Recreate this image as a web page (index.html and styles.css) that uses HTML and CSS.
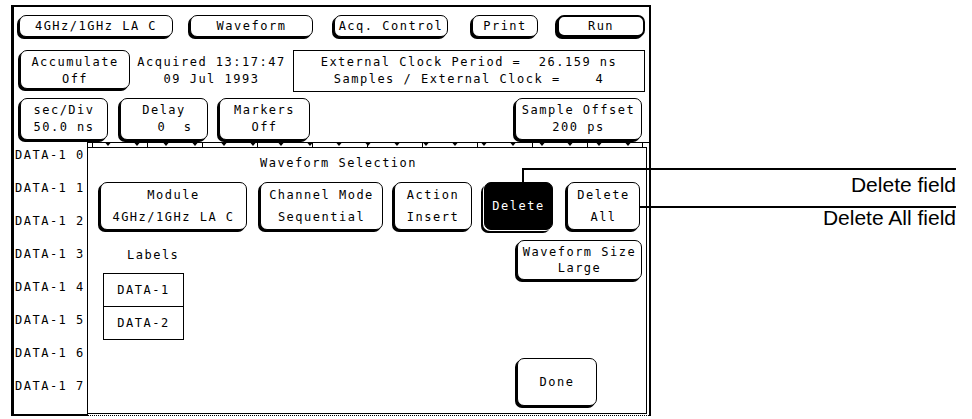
FILE: index.html
```html
<!DOCTYPE html>
<html>
<head>
<meta charset="utf-8">
<title>Waveform Selection</title>
<link rel="stylesheet" href="styles.css">
</head>
<body>
<div class="page">
  <div class="screen">
    <div class="row r1">
      <div class="btn b-mod"><span>4GHz/1GHz LA C</span></div>
      <div class="btn b-wave"><span>Waveform</span></div>
      <div class="btn b-acq"><span>Acq. Control</span></div>
      <div class="btn b-print"><span>Print</span></div>
      <div class="btn b-run"><span>Run</span></div>
    </div>
    <div class="row r2">
      <div class="btn b-accum"><span>Accumulate</span><span>Off</span></div>
      <div class="acquired"><span>Acquired 13:17:47</span><span>09 Jul 1993</span></div>
      <div class="clockbox"><span>External Clock Period =  26.159 ns</span><span>Samples / External Clock =    4</span></div>
    </div>
    <div class="row r3">
      <div class="btn b-sec"><span>sec/Div</span><span>50.0 ns</span></div>
      <div class="btn b-delay"><span>Delay</span><span class="delay-val">0  s</span></div>
      <div class="btn b-markers"><span>Markers</span><span>Off</span></div>
      <div class="btn b-offset"><span>Sample Offset</span><span>200 ps</span></div>
    </div>
    <div class="main">
      <div class="labels-col">
        <div class="lab">DATA-1 0</div>
        <div class="lab">DATA-1 1</div>
        <div class="lab">DATA-1 2</div>
        <div class="lab">DATA-1 3</div>
        <div class="lab">DATA-1 4</div>
        <div class="lab">DATA-1 5</div>
        <div class="lab">DATA-1 6</div>
        <div class="lab">DATA-1 7</div>
      </div>
      <div class="wave-area">
        <svg class="ruler" viewBox="0 0 561 5" width="561" height="5">
          <path d="M0 0.5H561" stroke="#000" stroke-width="1"/>
          <path d="M4.5 0V5M59.5 0V5M114.5 0V5M169.5 0V5M224.5 0V5M279.5 0V5M334.5 0V5M389.5 0V5M444.5 0V5M499.5 0V5M554.5 0V5" stroke="#000" stroke-width="1"/>
          <path d="M17.5 1h5l-2.5 3zM46.5 1h5l-2.5 3zM75.5 1h5l-2.5 3zM104.5 1h5l-2.5 3zM133.5 1h5l-2.5 3zM162.5 1h5l-2.5 3zM190.5 1h5l-2.5 3zM219.5 1h5l-2.5 3zM248.5 1h5l-2.5 3zM277.5 1h5l-2.5 3zM306.5 1h5l-2.5 3zM335.5 1h5l-2.5 3zM364.5 1h5l-2.5 3zM393.5 1h5l-2.5 3zM422.5 1h5l-2.5 3zM451.5 1h5l-2.5 3zM479.5 1h5l-2.5 3zM508.5 1h5l-2.5 3zM537.5 1h5l-2.5 3z" fill="#000"/>
        </svg>
        <div class="dialog">
          <div class="dlg-title">Waveform Selection</div>
          <div class="dlg-row">
            <div class="btn tall b-module"><span>Module</span><span>4GHz/1GHz LA C</span></div>
            <div class="btn tall b-chan"><span>Channel Mode</span><span>Sequential</span></div>
            <div class="btn tall b-action"><span>Action</span><span>Insert</span></div>
            <div class="btn tall b-del"><span>Delete</span></div>
            <div class="btn tall b-delall"><span>Delete</span><span>All</span></div>
          </div>
          <div class="dlg-lower">
            <div class="labels-area">
              <div class="labels-title">Labels</div>
              <div class="ltable">
                <div class="lrow">DATA-1</div>
                <div class="lrow">DATA-2</div>
              </div>
            </div>
            <div class="right-col">
              <div class="btn b-wsize"><span>Waveform Size</span><span>Large</span></div>
              <div class="btn b-done"><span>Done</span></div>
            </div>
          </div>
        </div>
      </div>
    </div>
  </div>
  <div class="notes">
    <div class="note">Delete field</div>
    <div class="note n2">Delete All field</div>
  </div>
</div>
</body>
</html>
```

FILE: styles.css
```css
* {
  box-sizing: border-box;
  margin: 0;
  padding: 0;
}

html, body {
  background: #fff;
}

body {
  margin: 0;
  font-family: "DejaVu Sans Mono", "Liberation Mono", monospace;
  font-size: 12px;
  letter-spacing: 1.5px;
  color: #000;
}

.page {
  display: flex;
  width: 972px;
  height: 419px;
  overflow: hidden;
}

/* ---------- instrument screen ---------- */
.screen {
  flex: none;
  margin-left: 11px;
  margin-top: 5px;
  width: 640px;
  height: 411px;
  border-top: 2px solid #000;
  border-left: 3px solid #000;
  border-right: 2px solid #000;
  display: flex;
  flex-direction: column;
}

.row {
  display: flex;
  align-items: flex-start;
  flex: none;
}

.r1 { margin-top: 8px; height: 22px; }
.r2 { margin-top: 13px; height: 42px; }
.r3 { margin-top: 6px; height: 42px; }

.btn {
  position: relative;
  flex: none;
  background: #fff;
  border: 1px solid #000;
  border-radius: 7px;
  box-shadow: -2px 2px 0 #000;
  display: flex;
  flex-direction: column;
  align-items: center;
  justify-content: center;
  white-space: pre;
  line-height: 17px;
}

/* row 1 */
.r1 .btn { height: 22px; }
.b-mod   { margin-left: 5px;  width: 154px; }
.b-wave  { margin-left: 17px; width: 123px; }
.b-acq   { margin-left: 21px; width: 114px; }
.b-print { margin-left: 24px; width: 66px; }
.b-run   { margin-left: 19px; width: 88px; border-width: 2px; }

/* row 2 */
.b-accum {
  margin-left: 6px;
  width: 110px;
  height: 39px;
  padding-top: 3px;
}

.acquired {
  flex: none;
  width: 163px;
  height: 42px;
  padding-top: 4px;
  display: flex;
  flex-direction: column;
  align-items: center;
  line-height: 17px;
  white-space: pre;
}

.clockbox {
  flex: none;
  width: 352px;
  height: 42px;
  border: 1px solid #000;
  display: flex;
  flex-direction: column;
  align-items: center;
  justify-content: center;
  line-height: 17px;
  white-space: pre;
}

/* row 3 */
.r3 .btn { height: 42px; }
.b-sec     { margin-left: 6px;   width: 88px; }
.b-delay   { margin-left: 12px;  width: 88px; }
.b-markers { margin-left: 11px;  width: 91px; }
.b-offset  { margin-left: 205px; width: 127px; }
.delay-val { padding-left: 22px; }

/* ---------- main area ---------- */
.main {
  margin-top: 2px;
  flex: 1;
  display: flex;
  min-height: 0;
}

.labels-col {
  flex: none;
  width: 74px;
  border-right: 1px solid #000;
  border-bottom: 2px solid #000;
  padding-top: 4px;
  padding-left: 1px;
}

.lab {
  height: 33px;
  line-height: 18px;
  white-space: pre;
}

.wave-area {
  flex: none;
  width: 561px;
  display: flex;
  flex-direction: column;
  padding-bottom: 1px;
  border-bottom: 1px dotted #000;
}

.ruler {
  display: block;
  flex: none;
  width: 561px;
  height: 5px;
}

.dialog {
  flex: 1;
  width: 559px;
  border-top: 1px solid #000;
  border-right: 1px solid #000;
  border-bottom: 1px solid #000;
  display: flex;
  flex-direction: column;
}

.dlg-title {
  margin-top: 6px;
  line-height: 18px;
  padding-left: 172px;
  white-space: pre;
}

.dlg-row {
  display: flex;
  align-items: flex-start;
  margin-top: 10px;
  padding-left: 12px;
}

.btn.tall {
  height: 48px;
  line-height: 22px;
}

.b-module { width: 147px; }
.b-chan   { margin-left: 13px; width: 123px; }
.b-action { margin-left: 11px; width: 78px; }
.b-del {
  margin-left: 12px;
  width: 69px;
  background: #000;
  color: #fff;
  box-shadow: -1px 1px 0 #fff, -3px 3px 0 #000;
}
.b-delall { margin-left: 14px; width: 73px; }

/* callout leader lines */
.b-del::before {
  content: "";
  position: absolute;
  left: 37px;
  top: -15px;
  width: 2px;
  height: 15px;
  background: #000;
}
.b-del::after {
  content: "";
  position: absolute;
  left: 37px;
  top: -15px;
  width: 434px;
  height: 2px;
  background: #000;
}
.b-delall::after {
  content: "";
  position: absolute;
  left: 72px;
  top: 23px;
  width: 316px;
  height: 2px;
  background: #000;
}

.dlg-lower {
  flex: 1;
  display: flex;
  justify-content: space-between;
}

.labels-area {
  padding-left: 15px;
}

.labels-title {
  margin-top: 16px;
  line-height: 18px;
  padding-left: 24px;
}

.ltable {
  margin-top: 9px;
  width: 81px;
  border: 1px solid #000;
}

.lrow {
  height: 32px;
  line-height: 32px;
  text-align: center;
}

.lrow + .lrow {
  height: 33px;
  border-top: 1px solid #000;
}

.right-col {
  flex: none;
  width: 125px;
  margin-right: 4px;
  display: flex;
  flex-direction: column;
  align-items: flex-start;
}

.b-wsize {
  margin-top: 10px;
  width: 125px;
  height: 40px;
  line-height: 16px;
}

.b-done {
  margin-top: 78px;
  width: 80px;
  height: 48px;
}

/* ---------- annotations ---------- */
.notes {
  flex: 1;
  padding-top: 173px;
  padding-right: 16px;
  text-align: right;
  font-family: "Liberation Sans", Arial, sans-serif;
  font-size: 21px;
  letter-spacing: 0;
  line-height: 24px;
  white-space: nowrap;
}

.n2 {
  margin-top: 9px;
}
```
